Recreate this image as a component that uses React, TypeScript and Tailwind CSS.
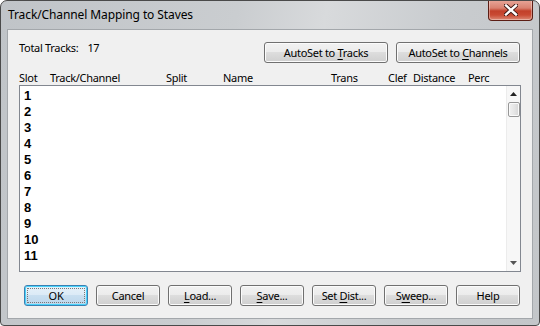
import React from "react";

const btn =
  "h-[21px] border border-[#707070] rounded-[3px] bg-[linear-gradient(#f2f2f2_0%,#ebebeb_50%,#dddddd_50%,#cfcfcf_100%)] shadow-[inset_0_0_0_1px_#fbfbfb] flex items-center justify-center text-[11px] tracking-[-0.3px] text-black leading-none";

function Btn({ w, children, def }: { w: string; children: React.ReactNode; def?: boolean }) {
  if (def) {
    return (
      <div
        className={`${w} h-[21px] border border-[#3c7fb1] rounded-[3px] bg-[linear-gradient(#e6f1f9_0%,#dbeaf6_50%,#c9dff0_50%,#bcd6ec_100%)] shadow-[inset_0_0_0_1px_#48d3fb] flex items-center justify-center text-[11px] tracking-[-0.3px] text-black leading-none p-[2px]`}
      >
        <div className="w-full h-full border border-dotted border-[#777] flex items-center justify-center">
          {children}
        </div>
      </div>
    );
  }
  return <div className={`${w} ${btn}`}>{children}</div>;
}

export default function App() {
  const rows = Array.from({ length: 11 }, (_, i) => i + 1);
  const font = { fontFamily: '"Noto Sans", "Open Sans", sans-serif' };
  return (
    <div
      className="w-[540px] h-[326px] flex flex-col border border-[#4a4a4a] rounded-t-[7px] rounded-b-[4px] bg-[linear-gradient(100deg,#c0c4c8_0%,#cacdd0_40%,#d8dadc_55%,#c9cccf_75%,#c3c6c9_100%)] overflow-hidden"
      style={font}
    >
      <div className="h-[28px] flex items-start shrink-0">
        <div className="pl-[7px] pt-[6px] text-[12px] leading-[16px] text-black tracking-[-0.1px]">
          Track/Channel Mapping to Staves
        </div>
        <div className="ml-auto mr-[6px] -mt-px w-[45px] h-[21px] border border-[#5b1d14] border-t-0 rounded-b-[4px] bg-[linear-gradient(#e8a79a_0%,#d98170_40%,#c2402a_55%,#c94a33_75%,#dc8a76_100%)] shadow-[inset_0_0_0_1px_rgba(255,255,255,0.35)] flex items-center justify-center">
          <svg width="14" height="12" viewBox="0 0 14 12">
            <path d="M2 1.5 L12 10.5 M12 1.5 L2 10.5" stroke="#3a1410" strokeWidth="4.2" strokeLinecap="square" />
            <path d="M2 1.5 L12 10.5 M12 1.5 L2 10.5" stroke="#ffffff" strokeWidth="2.4" strokeLinecap="square" />
          </svg>
        </div>
      </div>
      <div className="flex-1 ml-[6px] mr-[6px] mb-[6px] border border-[#a3a7ab] bg-[#f0f0f0] flex flex-col pl-[11px] pt-[12px] text-[11px] tracking-[-0.3px] text-black">
        <div className="flex items-start h-[21px] w-[501px]">
          <div className="leading-[12px] flex">
            <span>Total Tracks:</span>
            <span className="ml-[9px]">17</span>
          </div>
          <div className="ml-auto flex gap-[8px]">
            <Btn w="w-[124px]">
              <span>
                AutoSet to <u className="underline-offset-2">T</u>racks
              </span>
            </Btn>
            <Btn w="w-[124px]">
              <span>
                AutoSet to <u className="underline-offset-2">C</u>hannels
              </span>
            </Btn>
          </div>
        </div>
        <div className="flex mt-[9px] h-[12px] leading-[12px]">
          <span className="w-[31px]">Slot</span>
          <span className="w-[116px]">Track/Channel</span>
          <span className="w-[57px]">Split</span>
          <span className="w-[108px]">Name</span>
          <span className="w-[57px]">Trans</span>
          <span className="w-[25px]">Clef</span>
          <span className="w-[55px]">Distance</span>
          <span>Perc</span>
        </div>
        <div className="mt-[1px] w-[502px] h-[187px] border border-[#828790] bg-white flex">
          <div
            className="flex-1 pt-[2px] pl-[4px] font-bold text-[13px] tracking-normal"
            style={{ fontFamily: '"Liberation Sans", Arial, sans-serif' }}
          >
            {rows.map((r) => (
              <div key={r} className="h-[16px] leading-[16px]">
                {r}
              </div>
            ))}
          </div>
          <div className="w-[14px] bg-[#f7f7f7] border-l border-[#ececec] flex flex-col items-center">
            <div className="h-[16px] flex items-center justify-center">
              <svg width="7" height="4" viewBox="0 0 7 4">
                <path d="M3.5 0 L7 4 L0 4 Z" fill="#222" />
              </svg>
            </div>
            <div className="w-[12px] h-[15px] rounded-[2px] border border-[#979797] bg-[linear-gradient(90deg,#f2f2f2,#e6e6e6_50%,#d6d6d6)] shadow-[inset_0_0_0_1px_#fafafa]" />
            <div className="mt-auto h-[16px] flex items-center justify-center">
              <svg width="7" height="4" viewBox="0 0 7 4">
                <path d="M0 0 L7 0 L3.5 4 Z" fill="#555" />
              </svg>
            </div>
          </div>
        </div>
        <div className="mt-[13px] pl-[5px] flex gap-[8px]">
          <Btn w="w-[64px]" def>
            OK
          </Btn>
          <Btn w="w-[64px]">Cancel</Btn>
          <Btn w="w-[64px]">
            <span>
              <u className="underline-offset-2">L</u>oad...
            </span>
          </Btn>
          <Btn w="w-[64px]">
            <span>
              <u className="underline-offset-2">S</u>ave...
            </span>
          </Btn>
          <Btn w="w-[64px]">
            <span>
              Set <u className="underline-offset-2">D</u>ist...
            </span>
          </Btn>
          <Btn w="w-[64px]">
            <span>
              S<u className="underline-offset-2">w</u>eep...
            </span>
          </Btn>
          <Btn w="w-[64px]">Help</Btn>
        </div>
      </div>
    </div>
  );
}
